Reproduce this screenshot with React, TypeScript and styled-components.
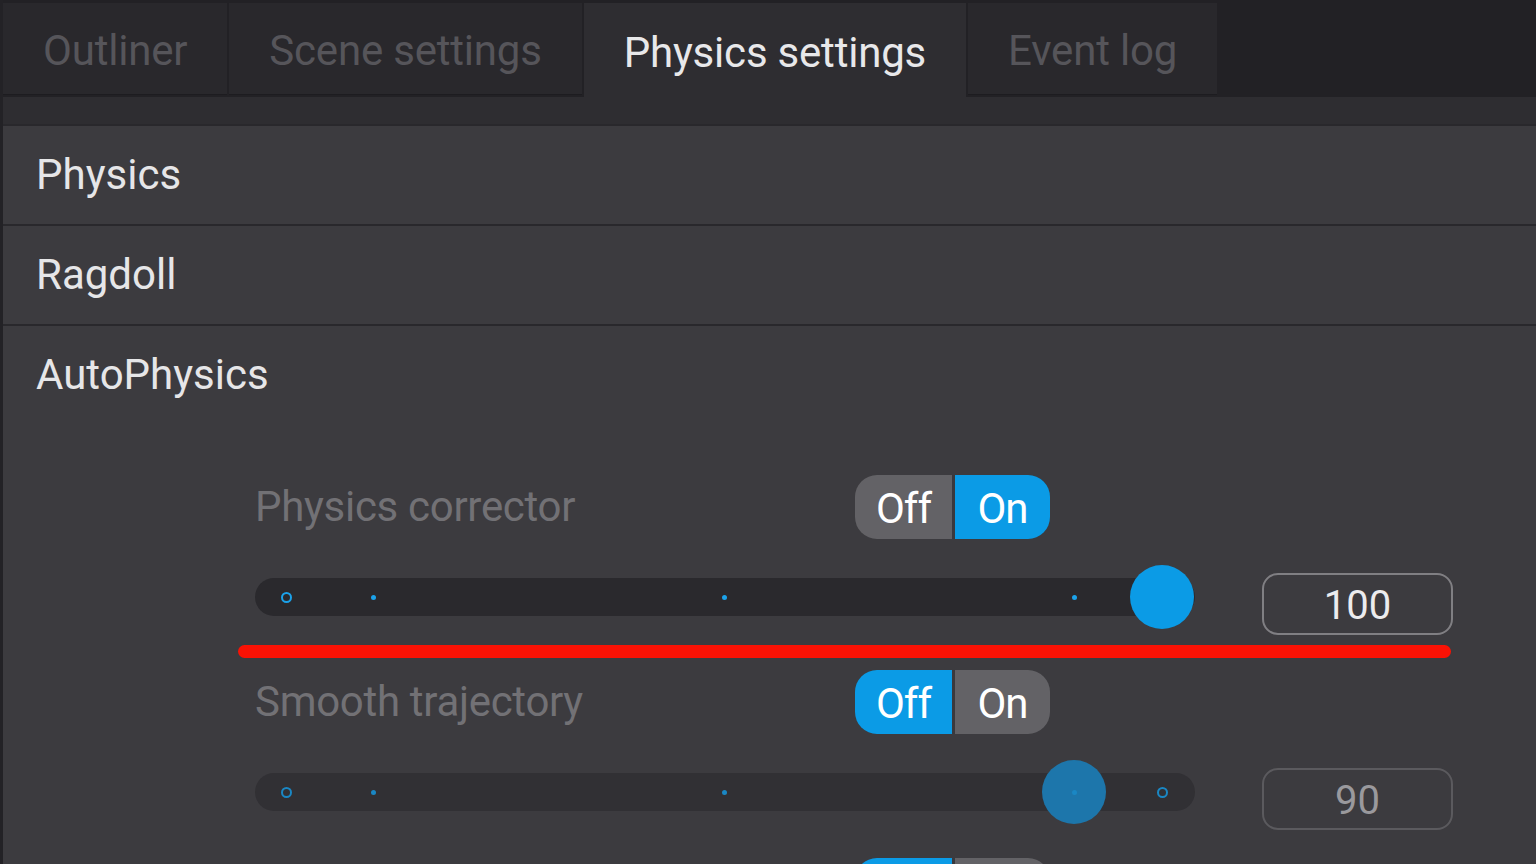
import styled, { createGlobalStyle } from "styled-components";

const GlobalStyle = createGlobalStyle`
  html, body {
    margin: 0;
    padding: 0;
    background: #3c3b3f;
  }
  * {
    box-sizing: border-box;
  }
`;

const TRACK_START = 31;
const TRACK_SPAN = 876;
const valueToX = (v: number) => TRACK_START + (v / 100) * TRACK_SPAN;

const Page = styled.div`
  width: 1536px;
  height: 864px;
  overflow: hidden;
  background: #3c3b3f;
  border-left: 3px solid #232226;
  font-family: Roboto, "Liberation Sans", sans-serif;
`;

const TabBar = styled.div`
  display: flex;
  align-items: flex-start;
  gap: 2px;
  height: 97px;
  padding-top: 3px;
  background: #222125;
`;

const Tab = styled.div<{ $active?: boolean }>`
  height: ${({ $active }) => ($active ? "94px" : "92px")};
  padding: 4px 40px 0;
  display: flex;
  align-items: center;
  font-size: 42px;
  letter-spacing: -0.2px;
  background: ${({ $active }) => ($active ? "#2e2d31" : "#29282c")};
  color: ${({ $active }) => ($active ? "#e8e8ea" : "#56555a")};
  border-bottom: ${({ $active }) => ($active ? "none" : "1px solid #1d1c20")};
`;

const TabStrip = styled.div`
  height: 29px;
  background: #2e2d31;
  border-bottom: 2px solid #29282c;
`;

const Section = styled.section<{ $last?: boolean }>`
  border-bottom: ${({ $last }) => ($last ? "none" : "2px solid #29282c")};
`;

const SectionTitle = styled.div`
  height: 98px;
  padding: 0 0 2px 33px;
  display: flex;
  align-items: center;
  font-size: 42px;
  color: #e6e6e8;
`;

const SectionBody = styled.div`
  padding: 51px 0 0 252px;
`;

const Setting = styled.div<{ $gap: number }>`
  margin-bottom: ${({ $gap }) => $gap}px;
`;

const SettingHead = styled.div`
  display: flex;
  align-items: center;
  height: 64px;
`;

const Label = styled.div`
  width: 600px;
  font-size: 42px;
  letter-spacing: -0.3px;
  color: #727175;
  padding-bottom: 2px;
`;

const Toggle = styled.div`
  display: flex;
  gap: 3px;
  height: 64px;
  border-radius: 22px;
  overflow: hidden;
  background: #3a393d;
`;

const Segment = styled.div<{ $on: boolean; $w: number }>`
  width: ${({ $w }) => $w}px;
  display: flex;
  align-items: center;
  justify-content: center;
  padding-top: 2px;
  font-size: 42px;
  letter-spacing: -1px;
  color: #ffffff;
  background: ${({ $on }) => ($on ? "#0b9be6" : "#636266")};
`;

const SliderRow = styled.div`
  display: flex;
  align-items: center;
  gap: 67px;
  margin-top: 34px;
`;

const Track = styled.div<{ $dim?: boolean }>`
  position: relative;
  width: 940px;
  height: 38px;
  margin-bottom: 14px;
  border-radius: 19px;
  background: ${({ $dim }) => ($dim ? "#313034" : "#2a292d")};
`;

const Ring = styled.span<{ $dim?: boolean }>`
  position: absolute;
  top: 50%;
  width: 11px;
  height: 11px;
  margin: -5.5px 0 0 -5.5px;
  border-radius: 50%;
  border: 2.5px solid ${({ $dim }) => ($dim ? "#1a87c4" : "#1ba2ea")};
  background: ${({ $dim }) => ($dim ? "#313034" : "#2a292d")};
`;

const Dot = styled.span<{ $dim?: boolean }>`
  position: absolute;
  top: 50%;
  z-index: 2;
  width: 5px;
  height: 5px;
  margin: -2.5px 0 0 -2.5px;
  border-radius: 50%;
  background: ${({ $dim }) => ($dim ? "#1a87c4" : "#1ba2ea")};
`;

const Thumb = styled.span<{ $dim?: boolean }>`
  position: absolute;
  top: 50%;
  z-index: 1;
  width: 64px;
  height: 64px;
  margin: -32px 0 0 -32px;
  border-radius: 50%;
  background: ${({ $dim }) => ($dim ? "#1d76ab" : "#0b9be6")};
`;

const NumberBox = styled.div<{ $dim?: boolean }>`
  width: 191px;
  height: 62px;
  display: flex;
  align-items: center;
  justify-content: center;
  border-radius: 16px;
  border: 2px solid ${({ $dim }) => ($dim ? "#5b5a5e" : "#807f83")};
  font-size: 40px;
  color: ${({ $dim }) => ($dim ? "#9a999d" : "#ececee")};
  padding-top: 2px;
`;

const Marker = styled.div`
  width: 1213px;
  height: 13px;
  margin: 10px 0 12px -17px;
  border-radius: 7px;
  background: #fa1205;
`;

type SliderProps = { value: number; dim?: boolean };

const Slider = ({ value, dim }: SliderProps) => (
  <Track $dim={dim}>
    <Ring $dim={dim} style={{ left: valueToX(0) }} />
    <Ring $dim={dim} style={{ left: valueToX(100) }} />
    {[10, 50, 90].map((t) => (
      <Dot key={t} $dim={dim} style={{ left: valueToX(t) }} />
    ))}
    <Thumb $dim={dim} style={{ left: valueToX(value) }} />
  </Track>
);

type SettingProps = {
  label: string;
  on: boolean;
  value?: number;
  dim?: boolean;
  marked?: boolean;
  hideText?: boolean;
};

const SettingBlock = ({ label, on, value, dim, marked, hideText }: SettingProps) => (
  <Setting $gap={marked ? 0 : 28}>
    <SettingHead>
      <Label>{label}</Label>
      <Toggle>
        <Segment $on={!on} $w={97}>
          {hideText ? null : "Off"}
        </Segment>
        <Segment $on={on} $w={95}>
          {hideText ? null : "On"}
        </Segment>
      </Toggle>
    </SettingHead>
    {value !== undefined && (
      <SliderRow>
        <Slider value={value} dim={dim} />
        <NumberBox $dim={dim}>{value}</NumberBox>
      </SliderRow>
    )}
    {marked && <Marker />}
  </Setting>
);

export default function App() {
  return (
    <>
      <GlobalStyle />
      <Page>
        <TabBar>
          <Tab>Outliner</Tab>
          <Tab>Scene settings</Tab>
          <Tab $active>Physics settings</Tab>
          <Tab>Event log</Tab>
        </TabBar>
        <TabStrip />
        <Section>
          <SectionTitle>Physics</SectionTitle>
        </Section>
        <Section>
          <SectionTitle>Ragdoll</SectionTitle>
        </Section>
        <Section $last>
          <SectionTitle>AutoPhysics</SectionTitle>
          <SectionBody>
            <SettingBlock label="Physics corrector" on value={100} marked />
            <SettingBlock label="Smooth trajectory" on={false} value={90} dim />
            {/* next row is cut off by the bottom edge */}
            <SettingBlock label="" on={false} hideText />
          </SectionBody>
        </Section>
      </Page>
    </>
  );
}
